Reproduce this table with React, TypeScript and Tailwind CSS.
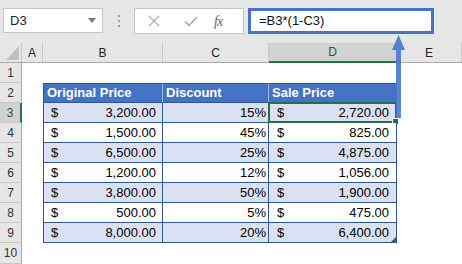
const rows = [
  { b: "3,200.00", c: "15%", d: "2,720.00" },
  { b: "1,500.00", c: "45%", d: "825.00" },
  { b: "6,500.00", c: "25%", d: "4,875.00" },
  { b: "1,200.00", c: "12%", d: "1,056.00" },
  { b: "3,800.00", c: "50%", d: "1,900.00" },
  { b: "500.00", c: "5%", d: "475.00" },
  { b: "8,000.00", c: "20%", d: "6,400.00" },
];

const cols = [
  { name: "A", w: "w-[21px]" },
  { name: "B", w: "w-[120px]" },
  { name: "C", w: "w-[106px]" },
  { name: "D", w: "w-[128px]" },
  { name: "E", w: "flex-1" },
];

function RowHeader({ n, selected }: { n: number; selected?: boolean }) {
  return (
    <div
      className={`w-[22px] shrink-0 h-full flex items-center justify-center border-b border-[#c8c8c8] text-[12px] ${
        selected
          ? "bg-[#d2d2d2] border-r-2 border-r-[#217346] text-[#1d5c38]"
          : "bg-[#e6e6e6] border-r border-r-[#ababab] text-[#333]"
      }`}
    >
      {n}
    </div>
  );
}

function FormulaBar() {
  return (
    <div className="h-[43px] bg-[#e6e6e6] flex items-start pt-[8px] pl-[3px]">
      <div className="w-[100px] h-[25px] bg-white border border-[#c6c6c6] flex items-center justify-between pl-[6px] pr-[6px] text-[13px] text-[#222]">
        <span>D3</span>
        <svg width="8" height="5" viewBox="0 0 8 5">
          <path d="M0 0h8L4 5z" fill="#7a7a7a" />
        </svg>
      </div>
      <div className="w-[31px] h-[26px] flex flex-col items-center justify-center gap-[3px]">
        <span className="w-[2px] h-[2px] bg-[#a0a0a0]" />
        <span className="w-[2px] h-[2px] bg-[#a0a0a0]" />
        <span className="w-[2px] h-[2px] bg-[#a0a0a0]" />
      </div>
      <div className="w-[110px] h-[26px] bg-white border border-[#c6c6c6] flex items-center pl-[13px]">
        <svg width="12" height="12" viewBox="0 0 12 12">
          <path d="M1 1l10 10M11 1L1 11" stroke="#b0b0b0" strokeWidth="1.4" />
        </svg>
        <svg className="ml-[24px]" width="14" height="11" viewBox="0 0 14 11">
          <path d="M1 5.5l4 4L13 1" stroke="#b0b0b0" strokeWidth="1.8" fill="none" />
        </svg>
        <span className="ml-[16px] text-[14px] italic text-[#666] font-['Liberation_Serif',serif] tracking-[-1px]">
          fx
        </span>
      </div>
      <div className="ml-[4px] w-[186px] h-[26px] bg-white border-[3px] border-[#4472c4] flex items-center pl-[8px] text-[13px] text-[#111]">
        =B3*(1-C3)
      </div>
    </div>
  );
}

function ColumnHeaders() {
  return (
    <div className="h-[20px] flex bg-[#e6e6e6] border-b border-[#ababab]">
      <div className="w-[22px] shrink-0 relative border-r border-[#c8c8c8]">
        <svg className="absolute right-[2px] bottom-[2px]" width="13" height="14" viewBox="0 0 13 14">
          <path d="M13 0V14H0z" fill="#c0c0c0" />
        </svg>
      </div>
      {cols.map((c) => (
        <div
          key={c.name}
          className={`${c.w} shrink-0 flex items-center justify-center text-[12px] border-r border-[#c8c8c8] ${
            c.name === "D"
              ? "bg-[#d2d2d2] border-b-2 border-b-[#217346] -mb-px text-[#1d5c38]"
              : "text-[#222]"
          }`}
        >
          {c.name}
        </div>
      ))}
    </div>
  );
}

function Money({ v }: { v: string }) {
  return (
    <>
      <span>$</span>
      <span>{v}</span>
    </>
  );
}

export default function App() {
  return (
    <div className="relative w-[462px] h-[264px] overflow-hidden bg-white font-['Liberation_Sans',Arial,sans-serif]">
      <FormulaBar />
      <ColumnHeaders />

      {/* row 1 */}
      <div className="h-[20px] flex">
        <RowHeader n={1} />
      </div>

      {/* row 2: table header */}
      <div className="h-[20px] flex">
        <RowHeader n={2} />
        <div className="w-[21px] shrink-0" />
        <div className="w-[120px] shrink-0 bg-[#4472c4] border-l border-y border-[#2f5597] border-r border-r-[#9fb6e0] flex items-center pl-[3px] text-[13px] font-bold text-white">
          Original Price
        </div>
        <div className="w-[106px] shrink-0 bg-[#4472c4] border-y border-[#2f5597] border-r border-r-[#9fb6e0] flex items-center pl-[3px] text-[13px] font-bold text-white">
          Discount
        </div>
        <div className="w-[128px] shrink-0 bg-[#4472c4] border-y border-r border-[#2f5597] flex items-center pl-[3px] text-[13px] font-bold text-white">
          Sale Price
        </div>
      </div>

      {rows.map((r, i) => {
        const band = i % 2 === 0 ? "bg-[#d9e1f2]" : "bg-white";
        const last = i === rows.length - 1;
        return (
          <div key={i} className="h-[20px] flex">
            <RowHeader n={i + 3} selected={i === 0} />
            <div className="w-[21px] shrink-0" />
            <div
              className={`w-[120px] shrink-0 ${band} border-l border-r border-b border-[#2f5597] flex items-center justify-between pl-[7px] pr-[6px] text-[13px] text-black`}
            >
              <Money v={r.b} />
            </div>
            <div
              className={`w-[106px] shrink-0 ${band} border-r border-b border-[#2f5597] flex items-center justify-end pr-[2px] text-[13px] text-black`}
            >
              {r.c}
            </div>
            <div
              className={`relative w-[128px] shrink-0 ${band} border-r border-b border-[#2f5597] flex items-center justify-between pl-[8px] pr-[7px] text-[13px] text-black`}
            >
              <Money v={r.d} />
              {i === 0 && (
                <div className="absolute -top-px -left-px -right-px -bottom-px border-2 border-[#217346]">
                  <div className="absolute -right-[4px] -bottom-[4px] w-[5px] h-[5px] bg-[#217346] border border-white box-content" />
                </div>
              )}
              {last && (
                <svg className="absolute right-0 bottom-0" width="5" height="5" viewBox="0 0 5 5">
                  <path d="M5 0V5H0z" fill="#2f5597" />
                </svg>
              )}
            </div>
          </div>
        );
      })}

      {/* row 10 */}
      <div className="h-[21px] flex">
        <RowHeader n={10} />
      </div>

      {/* arrow from D3 up to the formula */}
      <svg
        className="absolute left-[390px] top-[34px]"
        width="18"
        height="86"
        viewBox="0 0 18 86"
      >
        <path d="M8.5 1L15 16H11V84H6V16H2z" fill="#4a78cc" fillOpacity="0.92" />
      </svg>
    </div>
  );
}
